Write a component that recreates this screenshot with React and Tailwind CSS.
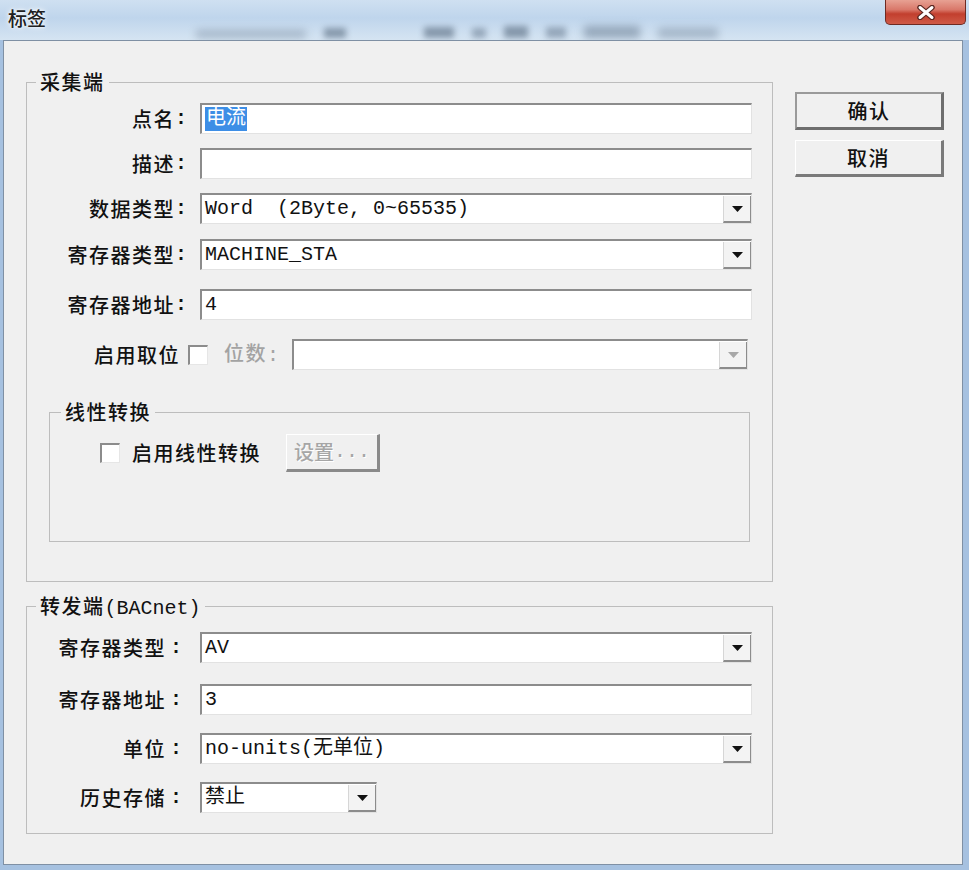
import React from "react";

const cjk = "font-['Noto_Sans_CJK_SC','Noto_Sans',sans-serif] font-medium";
const mono = "font-['Liberation_Mono','Noto_Sans_CJK_SC',monospace]";

const Arrow = ({ disabled = false }) => (
  <svg width="11" height="6" viewBox="0 0 11 6">
    <path d="M0 0H11L5.5 6Z" fill={disabled ? "#a8a8a8" : "#111"} />
  </svg>
);

const CloseX = () => (
  <svg width="18" height="15" viewBox="0 0 18 15">
    <path d="M3 2.5L15 12.5M15 2.5L3 12.5" stroke="#5a2620" strokeWidth="5.5" strokeLinecap="round" />
    <path d="M3 2.5L15 12.5M15 2.5L3 12.5" stroke="#ffffff" strokeWidth="3" strokeLinecap="round" />
  </svg>
);

const Field = ({ value, width = "w-[552px]", combo = false, disabled = false, selected = false }) => (
  <div
    className={`flex items-stretch h-[31px] bg-white border-t-2 border-l-2 border-t-[#8c8c8c] border-l-[#8c8c8c] border-b border-r border-b-[#e2e2e2] border-r-[#e2e2e2] ${width}`}
  >
    <div className={`flex-1 flex items-center pl-[3px] text-[20px] text-[#111] whitespace-pre ${mono}`}>
      {selected ? <span className="bg-[#3d8ee6] text-white px-[1px] leading-[24px]">{value}</span> : value}
    </div>
    {combo && (
      <div className="w-[28px] mt-[1px] flex items-center justify-center bg-[#f3f3f3] border-l border-l-[#d6d6d6] border-b-2 border-b-[#8c8c8c] border-r border-r-[#8c8c8c]">
        <Arrow disabled={disabled} />
      </div>
    )}
  </div>
);

const Label = ({ text, full = false }) => (
  <div className={`w-[160px] shrink-0 flex justify-end items-center text-[20px] tracking-[1.5px] text-[#111] ${cjk}`}>
    <span>{text}</span>
    {full ? (
      <span className={`w-[21px] pl-[4px] tracking-normal text-left font-bold ${mono}`}>:</span>
    ) : (
      <span className={`tracking-normal font-bold ${mono}`}>:</span>
    )}
  </div>
);

const Row = ({ label, full, className = "", ...field }) => (
  <div className={`flex items-center ${className}`}>
    <Label text={label} full={full} />
    <div className="ml-[13px]">
      <Field {...field} />
    </div>
  </div>
);

const Check = () => (
  <div className="w-[20px] h-[20px] shrink-0 bg-white border-t-2 border-l-2 border-t-[#8c8c8c] border-l-[#8c8c8c] border-b border-r border-b-[#e6e6e6] border-r-[#e6e6e6]" />
);

const Group = ({ title, legendLeft = "left-[9px]", className = "", children }) => (
  <div className={`relative border border-[#bdbdbd] ${className}`}>
    <span
      className={`absolute -top-[12px] px-[4px] bg-[#f0f0f0] text-[20px] leading-[22px] tracking-[1.5px] text-[#111] ${cjk} ${legendLeft}`}
    >
      {title}
    </span>
    {children}
  </div>
);

const TitleBar = () => (
  <div className="h-[40px] flex items-start bg-[linear-gradient(180deg,#cfe0f1_0%,#bfd5ec_45%,#d5e4f2_100%)] overflow-hidden">
    <div
      className={`pl-[8px] pt-[4px] text-[19px] text-[#202020] [text-shadow:0_0_6px_#ffffff,0_0_3px_#ffffff] ${cjk}`}
    >
      标签
    </div>
    <div className="flex-1 flex items-end h-[38px] pl-[150px] gap-[18px] opacity-60">
      <span className="w-[110px] h-[8px] bg-[#8496aa] blur-[4px]" />
      <span className="w-[22px] h-[10px] bg-[#55687d] blur-[3px]" />
      <span className="ml-[60px] w-[30px] h-[11px] bg-[#55687d] blur-[3px]" />
      <span className="w-[14px] h-[10px] bg-[#6e8196] blur-[3px]" />
      <span className="w-[24px] h-[12px] bg-[#55687d] blur-[3px]" />
      <span className="w-[20px] h-[11px] bg-[#6e8196] blur-[3px]" />
      <span className="w-[56px] h-[12px] bg-[#6e8196] blur-[4px]" />
      <span className="w-[60px] h-[10px] bg-[#8496aa] blur-[4px]" />
    </div>
    <div className="mr-[3px] w-[81px] h-[25px] rounded-b-[5px] border border-t-0 border-[#6e2a22] bg-[linear-gradient(180deg,#e7a193_0%,#d9786a_40%,#c23f2e_58%,#cf5a47_100%)] flex items-center justify-center">
      <CloseX />
    </div>
  </div>
);

export default function App() {
  return (
    <div className="w-[969px] h-[870px] overflow-hidden bg-[#a6c1e0] flex flex-col select-none">
      <TitleBar />
      <div className="ml-[3px] mr-[6px] h-[825px] bg-[#f0f0f0] border border-[#7f90a4] flex items-start pl-[22px]">
        <div className="w-[747px] shrink-0 flex flex-col">
          <Group title="采集端" className="mt-[41px] pt-[20px] pb-[39px]">
            <Row label="点名" value="电流" selected />
            <Row label="描述" value="" className="mt-[14px]" />
            <Row label="数据类型" value="Word  (2Byte, 0~65535)" combo className="mt-[14px]" />
            <Row label="寄存器类型" value="MACHINE_STA" combo className="mt-[15px]" />
            <Row label="寄存器地址" value="4" className="mt-[19px]" />
            <div className="mt-[18px] flex items-center">
              <div className={`w-[153px] shrink-0 text-right text-[20px] tracking-[1.5px] text-[#111] ${cjk}`}>启用取位</div>
              <div className="ml-[8px]">
                <Check />
              </div>
              <div className={`ml-[16px] w-[68px] shrink-0 text-[20px] tracking-[1.5px] text-[#a3a3a3] ${cjk}`}>
                位数<span className={`tracking-normal ${mono}`}>:</span>
              </div>
              <Field value="" width="w-[456px]" combo disabled />
            </div>
            <Group
              title="线性转换"
              legendLeft="left-[11px]"
              className="mt-[41px] ml-[22px] mr-[22px] pt-[21px] pb-[69px]"
            >
              <div className="flex items-center h-[38px] pl-[50px]">
                <Check />
                <span className={`ml-[12px] text-[20px] tracking-[1.5px] text-[#111] ${cjk}`}>启用线性转换</span>
                <div
                  className={`ml-[25px] w-[94px] h-[38px] flex items-center justify-center bg-[#f0f0f0] border-t border-l border-t-white border-l-white border-b-[3px] border-r-[3px] border-b-[#8a8a8a] border-r-[#8a8a8a] text-[20px] text-[#a6a6a6] [text-shadow:1px_1px_0_#ffffff] ${cjk}`}
                >
                  设置<span className={mono}>...</span>
                </div>
              </div>
            </Group>
          </Group>
          <Group
            title={
              <>
                转发端<span className={`tracking-normal ${mono}`}>(BACnet)</span>
              </>
            }
            className="mt-[24px] pt-[25px] pb-[20px]"
          >
            <Row label="寄存器类型" full value="AV" combo />
            <Row label="寄存器地址" full value="3" className="mt-[21px]" />
            <Row label="单位" full value="no-units(无单位)" combo className="mt-[18px]" />
            <Row label="历史存储" full value="禁止" width="w-[177px]" combo className="mt-[18px]" />
          </Group>
        </div>
        <div className="ml-[22px] mt-[51px] flex flex-col">
          <div
            className={`w-[149px] h-[38px] flex items-center justify-center bg-[#f0f0f0] border-t-2 border-l-2 border-t-[#9a9a9a] border-l-[#9a9a9a] border-b-[3px] border-r-[3px] border-b-[#6e6e6e] border-r-[#6e6e6e] text-[20px] tracking-[1.5px] text-[#111] ${cjk}`}
          >
            确认
          </div>
          <div
            className={`mt-[10px] w-[149px] h-[37px] flex items-center justify-center bg-[#f0f0f0] border-t border-l border-t-white border-l-white border-b-[3px] border-r-[3px] border-b-[#7a7a7a] border-r-[#7a7a7a] text-[20px] tracking-[1.5px] text-[#111] ${cjk}`}
          >
            取消
          </div>
        </div>
      </div>
    </div>
  );
}
